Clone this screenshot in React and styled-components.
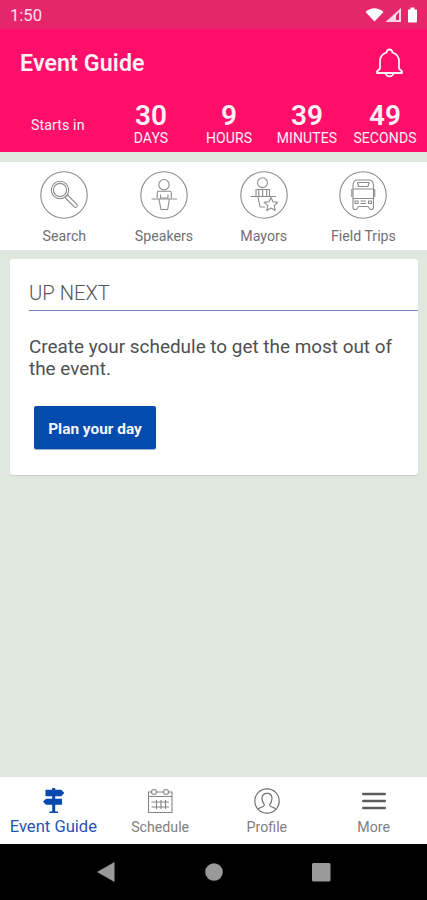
import React from 'react';
import styled, { createGlobalStyle } from 'styled-components';

const GlobalStyle = createGlobalStyle`
  * { box-sizing: border-box; }
  body { margin: 0; background: #dfe8df; font-family: Roboto, "Liberation Sans", sans-serif; }
  svg { display: block; }
`;

const Screen = styled.div`
  display: flex;
  flex-direction: column;
  width: 427px;
  height: 900px;
  overflow: hidden;
  background: #dfe8df;
`;

const StatusBar = styled.div`
  flex: 0 0 29px;
  display: flex;
  align-items: center;
  justify-content: space-between;
  padding: 2px 8px 0 10px;
  background: #e5266b;
  color: #ffe3ee;
  font-size: 16.6px;
  line-height: 20px;
`;

const Header = styled.header`
  flex: 0 0 123px;
  background: #ff0f69;
  color: #fff0f5;
`;

const TitleRow = styled.div`
  display: flex;
  align-items: center;
  justify-content: space-between;
  height: 68px;
  padding: 0 23px 0 20px;
`;

const Title = styled.h1`
  margin: 0;
  font-size: 23.2px;
  line-height: 28px;
  font-weight: 600;
  letter-spacing: 0.1px;
`;

const IconButton = styled.button`
  display: block;
  padding: 0;
  border: 0;
  background: none;
  color: inherit;
`;

const Countdown = styled.div`
  display: grid;
  grid-template-columns: 112px 78px 78px 78px 78px;
`;

const CountLabel = styled.div`
  padding: 19px 0 0 31px;
  font-size: 14.2px;
  line-height: 18px;
  letter-spacing: 0.1px;
`;

const Unit = styled.div`
  padding-top: 8px;
  text-align: center;
  white-space: nowrap;
`;

const UnitValue = styled.div`
  font-size: 28px;
  line-height: 22px;
  font-weight: 600;
`;

const UnitName = styled.div`
  margin-top: 4px;
  font-size: 14px;
  line-height: 14px;
  letter-spacing: 0.1px;
`;

const Shortcuts = styled.nav`
  flex: 0 0 88px;
  display: grid;
  grid-template-columns: repeat(4, 99.7px);
  margin-top: 10px;
  padding: 9px 0 0 14.5px;
  background: #fff;
`;

const Shortcut = styled.a`
  display: flex;
  flex-direction: column;
  align-items: center;
  color: #707070;
  font-size: 14.2px;
  line-height: 18px;
  white-space: nowrap;
`;

const ShortcutLabel = styled.span`
  margin-top: 8px;
`;

const Card = styled.section`
  flex: 0 0 216px;
  margin: 9px 9px 0 10px;
  padding: 0 0 0 19px;
  border-radius: 3px;
  background: #fff;
  box-shadow: 0 1px 1px #c8d0c9;
`;

const CardTitle = styled.h2`
  margin: 0;
  height: 52px;
  padding-top: 22px;
  border-bottom: 1.5px solid #7480c4;
  color: #555;
  font-size: 20.2px;
  line-height: 24px;
  font-weight: 300;
`;

const CardText = styled.p`
  margin: 25px 0 0;
  color: #505050;
  font-size: 18.92px;
  line-height: 22px;
  white-space: nowrap;
`;

const PlanButton = styled.button`
  display: block;
  width: 122px;
  height: 43px;
  margin: 26px 0 0 5px;
  padding: 2px 0 0;
  border: 0;
  border-radius: 2px;
  background: #034bad;
  box-shadow: 0 1px 1px #9dadc9;
  color: #f4f6ff;
  font-family: inherit;
  font-size: 15.4px;
  font-weight: 700;
`;

const TabBar = styled.nav`
  flex: 0 0 67px;
  display: grid;
  grid-template-columns: repeat(4, 1fr);
  margin-top: auto;
  background: #fff;
`;

const Tab = styled.a`
  display: flex;
  flex-direction: column;
  align-items: center;
  padding-top: 9px;
  color: ${({ $active }) => ($active ? '#2753b3' : '#808080')};
  font-size: ${({ $active }) => ($active ? '16.6px' : '14.2px')};
  line-height: 22px;
  white-space: nowrap;
`;

const TabIcon = styled.span`
  display: grid;
  place-items: center;
  height: 30px;
`;

const SystemBar = styled.div`
  flex: 0 0 56px;
  display: grid;
  grid-template-columns: repeat(3, 107.5px);
  justify-content: center;
  align-items: center;
  justify-items: center;
  background: #000;
`;

const StatusIcons = () => (
  <svg width="54" height="18" viewBox="0 0 54 18" fill="#fff">
    <path d="M.5 5 Q9.5 -2.5 18.5 5 L9.5 14.5Z" />
    <path d="M36 1V15H20.5Z" fillOpacity=".82" />
    <path d="M34 5V13H31V8.5Z" fill="#e5266b" />
    <path d="M43 2.5h2.5V.5h4v2H52v12q0 1-1 1h-7q-1 0-1-1Z" />
  </svg>
);

const BellIcon = () => (
  <svg width="29" height="30" viewBox="0 0 29 30" fill="none" stroke="currentColor" strokeWidth="1.8" strokeLinejoin="round">
    <path d="M2 23.5V25H27V23.5L24 20.5V12.5Q23.5 6.5 17.5 4.5Q17 1.5 14.5 1.5T11.5 4.5Q5.5 6.5 5 12.5V20.5Z" />
    <path d="M10.5 25.5Q11.5 28.3 14.5 28.3T18.5 25.5" />
  </svg>
);

const Ringed = ({ children }) => (
  <svg width="48" height="48" viewBox="0 0 48 48" fill="none" stroke="#8c8c8c" strokeWidth="1.1" strokeLinejoin="round">
    <circle cx="24" cy="24" r="23.2" />
    {children}
  </svg>
);

const SearchIcon = () => (
  <Ringed>
    <circle cx="20" cy="19" r="8.7" />
    <circle cx="20" cy="19" r="6.6" />
    <path d="M25 26.5l2.5-2.5 9.4 9.4q1 1.3-.2 2.5-1.3 1.1-2.5 0Z" />
  </Ringed>
);

const SpeakerIcon = () => (
  <Ringed>
    <circle cx="24" cy="13.7" r="5.2" />
    <path d="M17.2 27.5V22Q17.2 20.2 19 20.2H29.7Q31.3 20.2 31.3 22V27.5M20.5 23.5V27H28V23.5" />
    <path d="M11.5 28H37M19 28.5L21 38.5H27.7L29.3 28.5" />
  </Ringed>
);

const MayorIcon = () => (
  <Ringed>
    <circle cx="22.5" cy="11.7" r="4.9" />
    <path d="M16 25V18.5H29.5V25M18.8 18.5V25M26.7 18.5V25M22.7 18.5V25" />
    <path d="M10.5 25.5H36M18 26L20 36H25" />
    <path d="M31 26.5l2 4.3 4.7.6-3.4 3.3.8 4.7-4.1-2.3-4.2 2.3.9-4.7-3.5-3.3 4.8-.6Z" fill="#fff" />
  </Ringed>
);

const BusIcon = () => (
  <Ringed>
    <path d="M14 36.5V15Q14 9.5 18 9H30.5Q34.5 9.5 34.5 15V36.5Q34.5 38.5 32 38.5H31L29 35.5H19.5L17.5 38.5H16Q14 38.5 14 36.5Z" />
    <path d="M14 18H34.5M14 27.5H34.5M18.5 11.5H30L29 15.5H19.5Z" />
    <path d="M16 30h3v2.5h-3zM21.5 30H27M21.5 32.5H27M29.5 30h3v2.5h-3zM12.8 18V26M35.7 18V26" />
  </Ringed>
);

const SignpostIcon = () => (
  <svg width="24" height="26" viewBox="0 0 24 26" fill="#0649ae">
    <path d="M11.2 0h3v25h-3zM4.5 1.8H20.2L23.3 5 20.2 8.2H4.5zM5 10.7H21V16.8H5L2 13.8ZM8.5 23.5H17V25H8.5z" />
  </svg>
);

const CalendarIcon = () => (
  <svg width="26" height="26" viewBox="0 0 26 26" fill="none" stroke="#858585" strokeWidth="1.1">
    <path d="M4.5 4H1.5V24.5H25V4H21.5M9.5 4H16.5M1.5 8.5H25" />
    <circle cx="7" cy="4" r="2.5" />
    <circle cx="19" cy="4" r="2.5" />
    <path d="M4.5 14H22M4.5 19H22M9.5 12V21M14 12V21M18.5 12V21" />
  </svg>
);

const ProfileIcon = () => (
  <svg width="26" height="26" viewBox="0 0 26 26" fill="none" stroke="#707070" strokeWidth="1.2">
    <circle cx="13" cy="13" r="12.2" />
    <path d="M4 21.5Q5.5 19.5 9 18.5Q11 17.5 10 16Q8 13.5 8 10.5Q8 5.3 13 5.3T18 10.5Q18 13.5 16 16Q15 17.5 17 18.5Q20.5 19.5 22 21.5" />
  </svg>
);

const MenuIcon = () => (
  <svg width="24" height="20" viewBox="0 0 24 20" stroke="#5c5c5c" strokeWidth="2.4" strokeLinecap="round">
    <path d="M1.2 3H22.8M1.2 10H22.8M1.2 17H22.8" />
  </svg>
);

const BackIcon = () => (
  <svg width="18" height="20" viewBox="0 0 18 20" fill="#999"><path d="M0 10L17.5 0V20Z" /></svg>
);
const HomeIcon = () => (
  <svg width="18" height="18" viewBox="0 0 18 18" fill="#999"><circle cx="9" cy="9" r="8.8" /></svg>
);
const RecentsIcon = () => (
  <svg width="19" height="19" viewBox="0 0 19 19" fill="#999"><rect width="18.5" height="18.5" rx="1.5" /></svg>
);

const units = [['30', 'DAYS'], ['9', 'HOURS'], ['39', 'MINUTES'], ['49', 'SECONDS']];
const shortcuts = [['Search', SearchIcon], ['Speakers', SpeakerIcon], ['Mayors', MayorIcon], ['Field Trips', BusIcon]];
const tabs = [['Event Guide', SignpostIcon], ['Schedule', CalendarIcon], ['Profile', ProfileIcon], ['More', MenuIcon]];

export default function App() {
  return (
    <>
      <GlobalStyle />
      <Screen>
        <StatusBar><span>1:50</span><StatusIcons /></StatusBar>
        <Header>
          <TitleRow>
            <Title>Event Guide</Title>
            <IconButton aria-label="Notifications"><BellIcon /></IconButton>
          </TitleRow>
          <Countdown>
            <CountLabel>Starts in</CountLabel>
            {units.map(([value, name]) => (
              <Unit key={name}><UnitValue>{value}</UnitValue><UnitName>{name}</UnitName></Unit>
            ))}
          </Countdown>
        </Header>
        <Shortcuts>
          {shortcuts.map(([label, Icon]) => (
            <Shortcut key={label}><Icon /><ShortcutLabel>{label}</ShortcutLabel></Shortcut>
          ))}
        </Shortcuts>
        <Card>
          <CardTitle>UP NEXT</CardTitle>
          <CardText>Create your schedule to get the most out of<br />the event.</CardText>
          <PlanButton>Plan your day</PlanButton>
        </Card>
        <TabBar>
          {tabs.map(([label, Icon], i) => (
            <Tab key={label} $active={i === 0}><TabIcon><Icon /></TabIcon>{label}</Tab>
          ))}
        </TabBar>
        <SystemBar><BackIcon /><HomeIcon /><RecentsIcon /></SystemBar>
      </Screen>
    </>
  );
}
